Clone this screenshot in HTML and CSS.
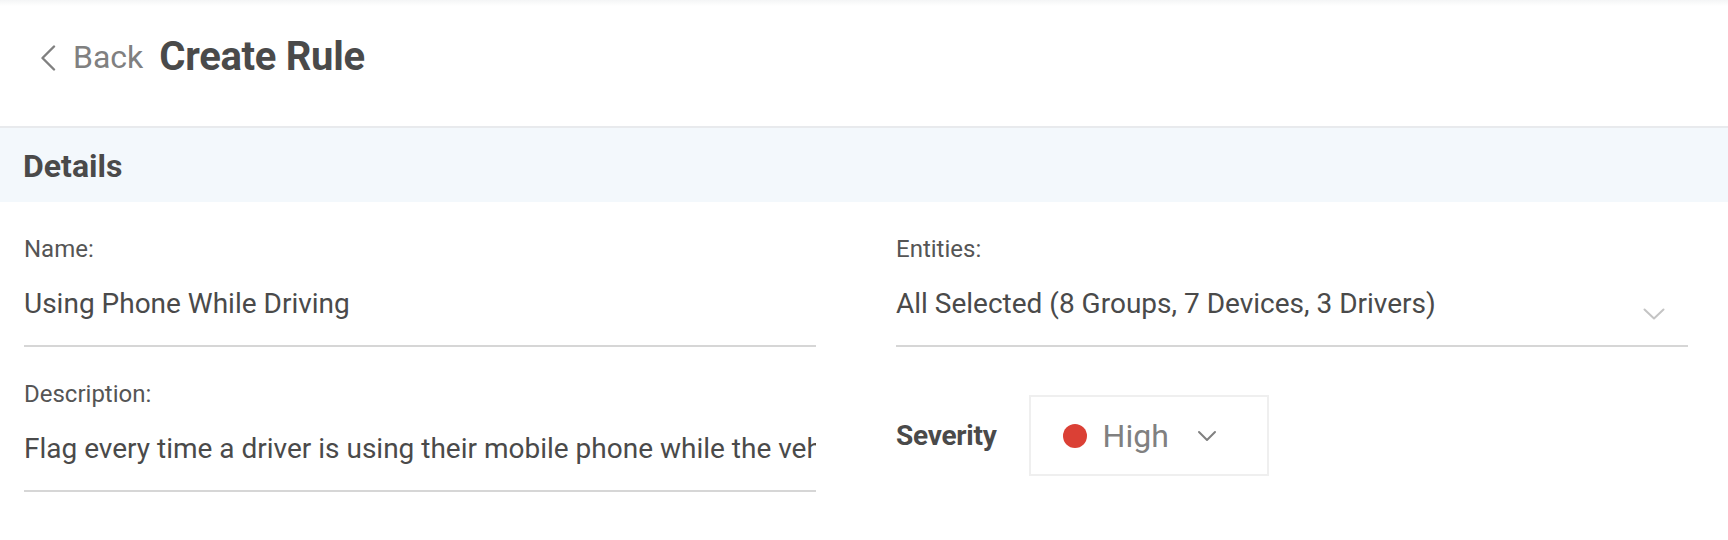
FILE: index.html
```html
<!DOCTYPE html>
<html lang="en">
<head>
<meta charset="utf-8">
<title>Create Rule</title>
<link rel="stylesheet" href="styles.css">
</head>
<body>
<header class="page-header">
  <a class="back" href="#">
    <svg class="back-icon" width="16" height="26" viewBox="0 0 16 26" aria-hidden="true"><path d="M14 1.5 L2.5 13 L14 24.5" fill="none" stroke="#808080" stroke-width="2.4" stroke-linecap="round" stroke-linejoin="round"/></svg>
    <span class="back-text">Back</span>
  </a>
  <h1 class="title">Create Rule</h1>
</header>
<section class="section-bar">
  <h2 class="section-title">Details</h2>
</section>
<main class="form-grid">
  <div class="col">
    <div class="field">
      <div class="label">Name:</div>
      <div class="input"><span class="value">Using Phone While Driving</span></div>
    </div>
    <div class="field field-gap">
      <div class="label">Description:</div>
      <div class="input"><span class="value">Flag every time a driver is using their mobile phone while the vehicle is in motion</span></div>
    </div>
  </div>
  <div class="col">
    <div class="field">
      <div class="label">Entities:</div>
      <div class="input select">
        <span class="value">All Selected (8 Groups, 7 Devices, 3 Drivers)</span>
        <svg class="select-chev" width="22" height="12" viewBox="0 0 22 12" aria-hidden="true"><path d="M1.5 1.5 L11 10.5 L20.5 1.5" fill="none" stroke="#c4c4c4" stroke-width="2" stroke-linecap="round" stroke-linejoin="round"/></svg>
      </div>
    </div>
    <div class="severity-row">
      <span class="severity-label">Severity</span>
      <div class="severity-box">
        <span class="dot"></span>
        <span class="severity-value">High</span>
        <svg class="sev-chev" width="20" height="12" viewBox="0 0 20 12" aria-hidden="true"><path d="M2 2 L10 10 L18 2" fill="none" stroke="#808080" stroke-width="2" stroke-linecap="round" stroke-linejoin="round"/></svg>
      </div>
    </div>
  </div>
</main>
</body>
</html>
```

FILE: styles.css
```css
* { box-sizing: border-box; }
html, body { margin: 0; padding: 0; background: #ffffff; }
body {
  font-family: Roboto, "Liberation Sans", Arial, sans-serif;
  color: #4a4a4a;
  width: 1728px;
  height: 540px;
  overflow: hidden;
}

.page-header {
  height: 128px;
  padding: 33px 24px 0 40px;
  display: flex;
  align-items: flex-start;
  background: linear-gradient(#f4f5f6 0, #ffffff 6px);
  border-bottom: 2px solid #e8eaed;
}
.back {
  display: flex;
  align-items: center;
  height: 48px;
  text-decoration: none;
  color: #808080;
}
.back-icon { display: block; margin-top: 2px; }
.back-text {
  margin-left: 17px;
  font-size: 32px;
  line-height: 40px;
  font-weight: 400;
  color: #808080;
}
.title {
  margin: 0 0 0 16px;
  font-size: 40px;
  line-height: 48px;
  font-weight: 700;
  color: #4a4a4a;
  letter-spacing: -0.3px;
}

.section-bar {
  height: 74px;
  background: #f3f8fc;
  display: flex;
  align-items: center;
  padding: 2px 24px 0 23px;
}
.section-title {
  margin: 0;
  font-size: 32px;
  line-height: 40px;
  font-weight: 700;
  color: #4a4a4a;
}

.form-grid {
  display: grid;
  grid-template-columns: 1fr 1fr;
  column-gap: 80px;
  padding: 31px 40px 0 24px;
}
.col { min-width: 0; }

.field { display: flex; flex-direction: column; }
.field-gap { margin-top: 31px; }
.label {
  font-size: 24px;
  line-height: 32px;
  color: #555555;
}
.input {
  margin-top: 19px;
  height: 63px;
  padding-bottom: 21px;
  border-bottom: 2px solid #d6d6d6;
  display: flex;
  align-items: center;
  overflow: hidden;
}
.value {
  min-width: 0;
  font-size: 28px;
  line-height: 40px;
  color: #4a4a4a;
  white-space: nowrap;
  overflow: hidden;
  text-overflow: clip;
}
.select { justify-content: space-between; }
.select-chev { flex: none; margin: 20px 23px 0 0; display: block; }

.severity-row {
  margin-top: 48px;
  display: flex;
  align-items: center;
}
.severity-label {
  font-size: 28px;
  line-height: 40px;
  font-weight: 700;
  color: #4a4a4a;
  letter-spacing: -0.25px;
}
.severity-box {
  margin-left: 32px;
  width: 240px;
  height: 81px;
  border: 2px solid #efefef;
  display: flex;
  align-items: center;
  padding-left: 32px;
}
.dot {
  width: 24px;
  height: 24px;
  border-radius: 50%;
  background: #db4035;
  flex: none;
}
.severity-value {
  margin-left: 16px;
  font-size: 32px;
  line-height: 40px;
  color: #808080;
}
.sev-chev { margin-left: 28px; display: block; flex: none; }
```
